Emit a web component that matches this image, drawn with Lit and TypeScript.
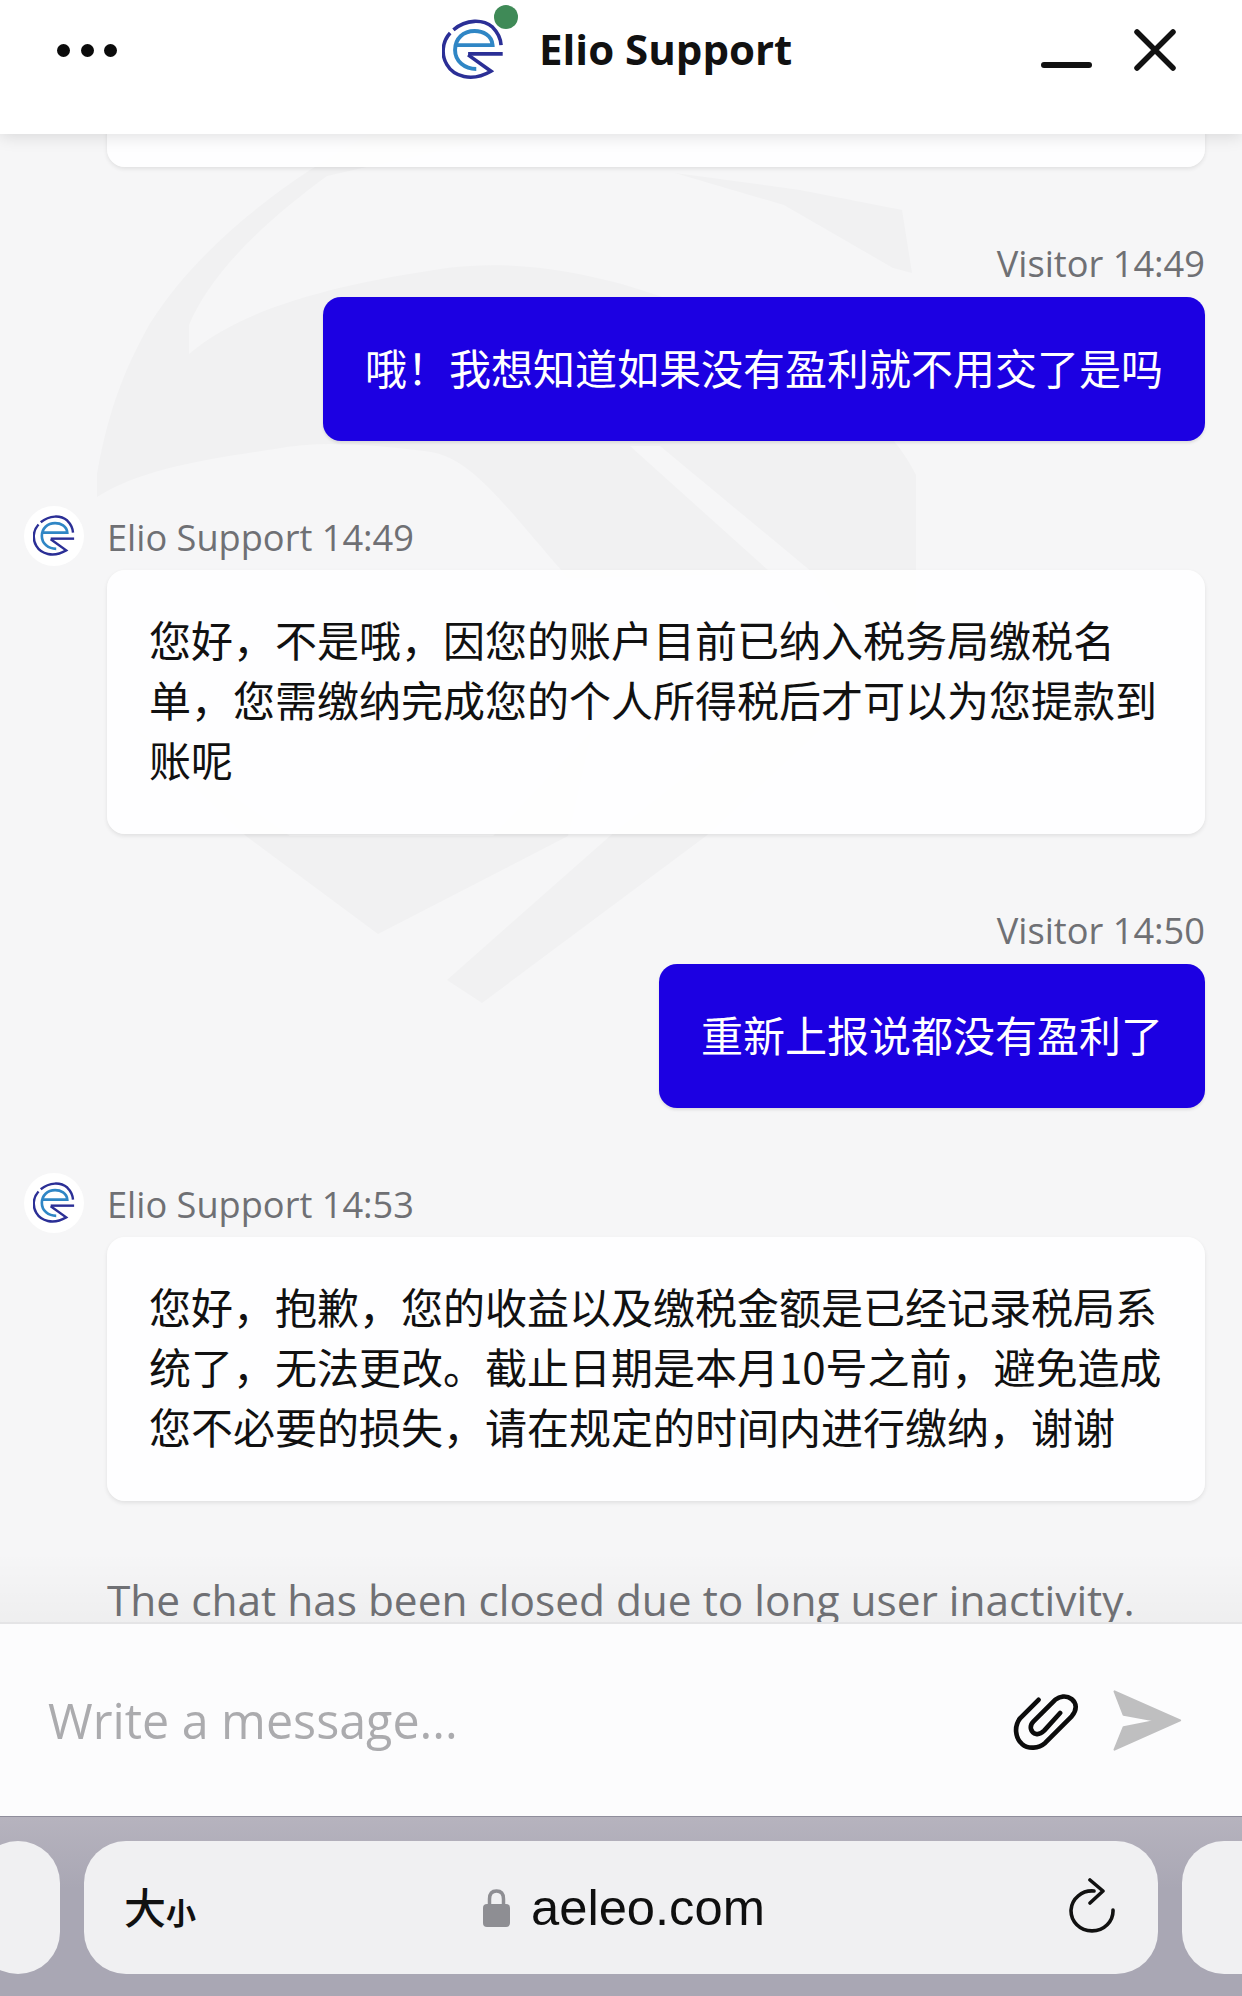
import { LitElement, html, css, svg } from "lit";
import { customElement } from "lit/decorators.js";

const logo = (size: number) => html`<svg class="logo" width=${size} height=${size} viewBox="125 55 190 190" fill="none">
  <path d="M150 98 C125 125 122 165 140 195 C160 230 215 250 275 215 L205 165" stroke="#2b2f96" stroke-width="11"/>
  <path d="M160 88 C200 55 250 55 280 80 C295 95 305 115 306 135" stroke="#2b2f96" stroke-width="11"/>
  <path d="M205 162 H311" stroke="#2b2f96" stroke-width="11"/>
  <path d="M168 135 H280 C278 105 250 92 225 92 C190 92 165 115 165 150 C165 185 195 208 230 208" stroke="#2f86c5" stroke-width="12"/>
</svg>`;

@customElement("app-root")
export class AppRoot extends LitElement {
  static styles = css`
    :host { display: block; width: 1242px; height: 1996px; overflow: hidden;
      font-family: "Open Sans", "Noto Sans", "Noto Sans CJK SC", sans-serif; background: #f6f6f7; }
    .page { position: relative; display: flex; flex-direction: column; height: 1996px; }
    .wm { position: absolute; left: 0; top: 0; }
    .header { position: relative; z-index: 2; height: 134px; flex: none; background: rgba(255,255,255,.96);
      box-shadow: 0 2px 16px rgba(0,0,0,.13); display: flex; align-items: flex-start; padding: 29px 66px 0 57px; justify-content: space-between; box-sizing: border-box; }
    .dots { display: flex; gap: 10.5px; margin-top: 15px; }
    .dots i { width: 13px; height: 13px; border-radius: 50%; background: #0b0b0b; }
    .brand { position: absolute; left: 442px; top: 0; display: flex; align-items: center; gap: 35px; height: 100px; }
    .logo { display: block; flex: none; }
    .avatarwrap { position: relative; width: 62px; height: 62px; }
    .dot { position: absolute; right: -14px; top: -14px; width: 24px; height: 24px; border-radius: 50%; background: #3f8a57; }
    .title { font-size: 42px; font-weight: 700; color: #111; white-space: nowrap; margin-top: -4px; }
    .actions { display: flex; gap: 42px; }
    .chat { position: relative; flex: 1; min-height: 0; overflow: hidden; }
    .fade { position: absolute; left: 0; right: 0; bottom: 0; height: 70px; background: linear-gradient(rgba(0,0,0,0), rgba(0,0,0,.03)); }
    .list { position: relative; display: flex; flex-direction: column; align-items: flex-end; padding: 0 37px 0 107px; margin-top: -200px; }
    .bubble { box-sizing: border-box; border-radius: 18px; padding: 39px 42px 45px; font-family: "Noto Sans CJK SC", sans-serif; font-size: 42px; line-height: 60px; }
    .agent { width: 1098px; background: rgba(255,255,255,.9); color: #111; box-shadow: 0 2px 4px rgba(0,0,0,.09); }
    .visitor { background: #1c00e2; color: #fff; white-space: nowrap; box-shadow: 0 2px 3px rgba(0,0,0,.1); height: 144px; display: flex; align-items: center; padding: 0 42px 4px; }
    .first { height: 233px; }
    .meta { font-size: 36.2px; line-height: 44px; color: #6f7074; height: 44px; display: flex; align-items: center; white-space: nowrap; }
    .vmeta { margin-top: 74px; margin-bottom: 12px; }
    .ameta { align-self: flex-start; margin-top: 74px; margin-bottom: 11px; position: relative; }
    .av { position: absolute; left: -83px; top: -9px; width: 60px; height: 60px; border-radius: 50%; background: #fff; display: flex; align-items: center; justify-content: center; }
    .closed { align-self: flex-start; font-size: 42.4px; color: #6f7074; line-height: 52px; margin-top: 73px; white-space: nowrap; }
    .composer { height: 194px; flex: none; box-sizing: border-box; background: #fcfcfd; border-top: 2px solid #e4e4e6; display: flex; align-items: center; padding: 0 59px 0 48px; position: relative; z-index: 1; }
    .placeholder { font-size: 48.4px; color: #ababae; flex: 1; }
    .icons { display: flex; align-items: center; gap: 31px; }
    .clip { margin-top: 5px; }
    .bar { height: 180px; flex: none; box-sizing: border-box; background: linear-gradient(#b6b3be, #a9a7b4 40%); border-top: 1px solid #8f8d9b; display: flex; gap: 24px; padding-top: 24px; align-items: flex-start; margin: 0 -24px; overflow: hidden; position: relative; z-index: 1; }
    .pill { background: #f0f0f2; height: 133px; border-radius: 42px; box-sizing: border-box; flex: none; }
    .side { width: 84px; }
    .far { width: 200px; }
    .url { width: 1074px; display: flex; align-items: center; position: relative; padding: 0 43px 0 40px; justify-content: space-between; }
    .aa { font-family: "Noto Sans CJK SC", sans-serif; color: #111; display: flex; align-items: baseline; margin-top: -5px; }
    .aa b { font-size: 42px; font-weight: 500; }
    .aa small { font-size: 30px; font-weight: 700; }
    .host { position: absolute; left: 399px; top: 0; height: 133px; display: flex; align-items: center; gap: 21px; font-family: "Liberation Sans", sans-serif; font-size: 50.7px; color: #0f0f0f; }
    .reload { margin-top: -4px; }
  `;

  private watermark() {
    return svg`<svg class="wm" width="1242" height="1100" viewBox="0 0 1242 1100">
      <g fill="#f1f1f2">
        <path d="M372 133 L500 80 L640 72 L634 130 L515 133 L327 176 C260 225 210 275 189 325 L189 354 C240 310 330 285 447 268 C510 260 570 270 625 285 C760 325 880 400 916 475 L916 640 L860 640 L812 572 L568 578 C500 500 470 455 424 451 C370 445 320 440 275 449 C200 460 140 470 97 497 L97 474 C110 400 130 360 149 325 C190 260 250 210 310 170 Z"/>
        <path d="M675 173 L800 190 L902 210 L912 273 L893 268 L784 205 Z"/>
        <path d="M132 727 L246 836 L378 934 L568 836 L591 733 L493 836 L290 836 Z"/>
        <path d="M447 980 L482 1003 L706 836 L916 640 L860 640 L610 836 Z"/>
      </g>
      <path d="M630 446 L660 446 L812 572 L770 572 Z" fill="#f6f6f7"/>
    </svg>`;
  }

  render() {
    return html`<div class="page">
      ${this.watermark()}
      <div class="header">
        <div class="dots"><i></i><i></i><i></i></div>
        <div class="brand">
          <div class="avatarwrap">${logo(62)}<span class="dot"></span></div>
          <div class="title">Elio Support</div>
        </div>
        <div class="actions">
          <svg width="51" height="42" viewBox="0 0 51 42"><rect y="33" width="51" height="6" rx="3" fill="#111"/></svg>
          <svg width="42" height="42" viewBox="0 0 42 42"><path d="M3 3 L39 39 M39 3 L3 39" stroke="#111" stroke-width="5.5" stroke-linecap="round"/></svg>
        </div>
      </div>
      <div class="chat">
        <div class="fade"></div>
        <div class="list">
          <div class="bubble agent first"></div>
          <div class="meta vmeta">Visitor 14:49</div>
          <div class="bubble visitor">哦！我想知道如果没有盈利就不用交了是吗</div>
          <div class="meta ameta"><span class="av">${logo(42)}</span>Elio Support 14:49</div>
          <div class="bubble agent">您好，不是哦，因您的账户目前已纳入税务局缴税名单，您需缴纳完成您的个人所得税后才可以为您提款到账呢</div>
          <div class="meta vmeta">Visitor 14:50</div>
          <div class="bubble visitor">重新上报说都没有盈利了</div>
          <div class="meta ameta"><span class="av">${logo(42)}</span>Elio Support 14:53</div>
          <div class="bubble agent">您好，抱歉，您的收益以及缴税金额是已经记录税局系统了，无法更改。截止日期是本月10号之前，避免造成您不必要的损失，请在规定的时间内进行缴纳，谢谢</div>
          <div class="closed">The chat has been closed due to long user inactivity.</div>
        </div>
      </div>
      <div class="composer">
        <div class="placeholder">Write a message...</div>
        <div class="icons">
          <svg class="clip" width="68" height="60" viewBox="155 95 205 180" fill="none"><path d="M235 115 L180 170 C160 195 165 230 185 248 C205 265 235 262 255 245 L335 165 C352 145 350 125 335 113 C318 100 298 105 285 115 L220 180 C205 195 212 215 228 218 C238 220 245 215 252 208 L300 155" stroke="#0c0c0c" stroke-width="14" stroke-linecap="round" stroke-linejoin="round"/></svg>
          <svg width="72" height="65" viewBox="455 85 215 195"><path d="M465 95 L662 182 L465 270 L492 203 L590 183 L492 165 Z" fill="#bfbfc0" stroke="#bfbfc0" stroke-width="6" stroke-linejoin="round"/></svg>
        </div>
      </div>
      <div class="bar">
        <div class="pill side"></div>
        <div class="pill url">
          <div class="aa"><b>大</b><small>小</small></div>
          <div class="host">
            <svg width="27" height="38" viewBox="0 0 27 38"><path d="M6.5 18 V10 C6.5 5 9 2 13.5 2 C18 2 20.5 5 20.5 10 V18" fill="none" stroke="#8e8e93" stroke-width="3.5"/><rect y="15" width="27" height="23" rx="4" fill="#8e8e93"/></svg>
            aeleo.com
          </div>
          <svg class="reload" width="46" height="56" viewBox="0 0 46 56" fill="none"><path d="M25 13 A21 20 0 1 0 44 32" stroke="#111" stroke-width="3.6" stroke-linecap="round"/><path d="M21 2 L34 13 L21 25" stroke="#111" stroke-width="3.6" stroke-linecap="round" stroke-linejoin="round"/></svg>
        </div>
        <div class="pill far"></div>
      </div>
    </div>`;
  }
}
